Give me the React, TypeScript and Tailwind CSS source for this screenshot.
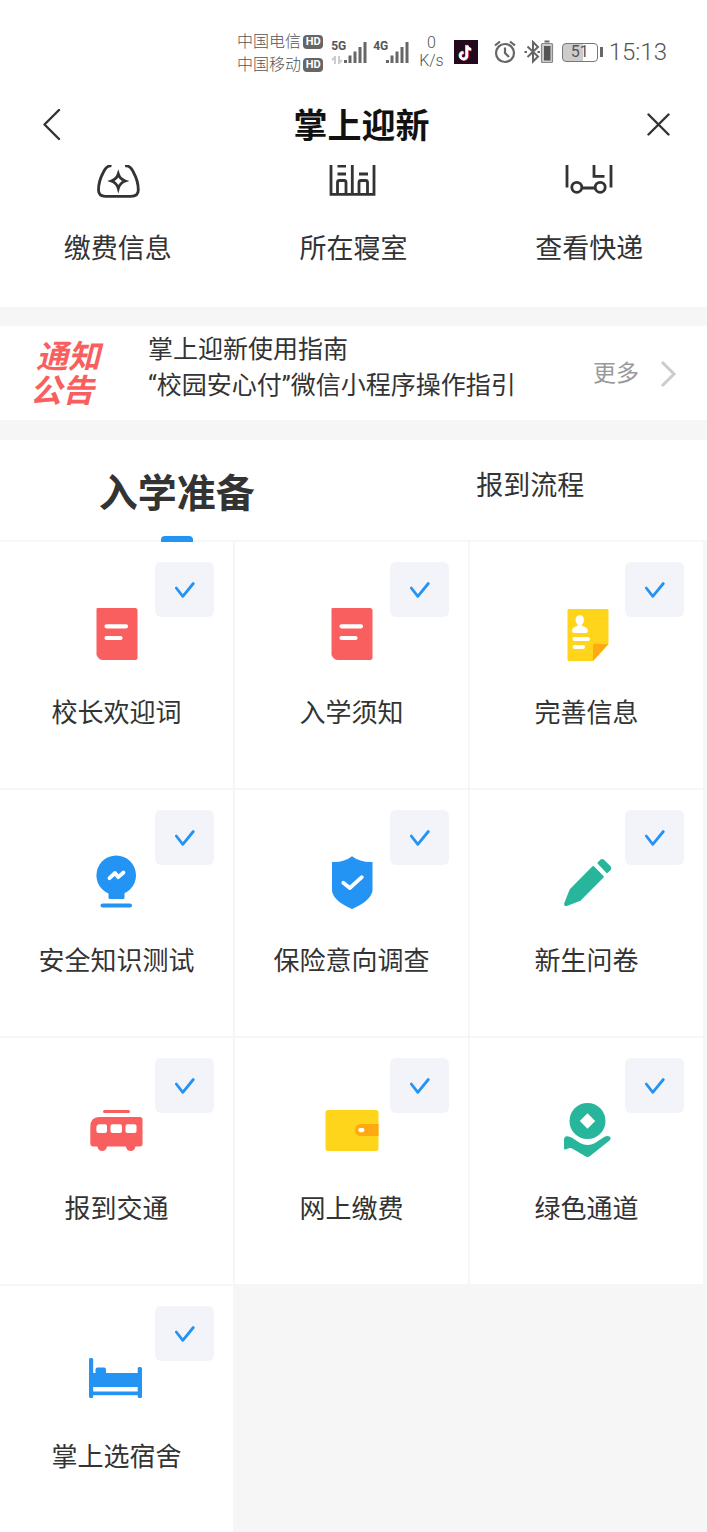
import React, { useState } from 'react';
import clsx from 'clsx';

type IconName =
  | 'book'
  | 'profile'
  | 'bulb'
  | 'shield'
  | 'pencil'
  | 'bus'
  | 'wallet'
  | 'grant'
  | 'bed';

interface Task {
  id: string;
  label: string;
  icon: IconName;
}

const TASKS: Task[] = [
  { id: 'welcome', label: '校长欢迎词', icon: 'book' },
  { id: 'guide', label: '入学须知', icon: 'book' },
  { id: 'profile', label: '完善信息', icon: 'profile' },
  { id: 'safety', label: '安全知识测试', icon: 'bulb' },
  { id: 'insurance', label: '保险意向调查', icon: 'shield' },
  { id: 'survey', label: '新生问卷', icon: 'pencil' },
  { id: 'traffic', label: '报到交通', icon: 'bus' },
  { id: 'payment', label: '网上缴费', icon: 'wallet' },
  { id: 'green', label: '绿色通道', icon: 'grant' },
  { id: 'dorm', label: '掌上选宿舍', icon: 'bed' }
];

const TABS = ['入学准备', '报到流程'];

const taskIcons: Record<IconName, React.ReactNode> = {
  book: (
    <>
      <path d="M8.500 2H46q2.500 0 2.500 2.500v47q0 2.500-2.500 2.500H14q-2.500 0-4-1.500t-2.500-3.500V3q0-1 1-1Z" fill="#fa5f60" />
      <path d="M17.500 20.300H37M17.500 32H31.500" stroke="#fff" strokeWidth="4.200" strokeLinecap="round" />
    </>
  ),
  profile: (
    <>
      <path d="M10 3H48q1.500 0 1.500 1.500V38L34 55H10q-1.500 0-1.500-1.500v-49Q8.500 3 10 3Z" fill="#fed51b" />
      <path d="M34 55V40q0-2.500 2.500-2.500 7 1 13 .5Z" fill="#ffaa12" />
      <ellipse cx="20.800" cy="14" rx="4.200" ry="4.800" fill="#fff" />
      <path d="M18.500 17h4.500v3q6 1 6 5 0 2-2.500 2h-11q-2.500 0-2.500-2 0-4 5.500-5Z" fill="#fff" />
      <path d="M15.500 33H29M15.500 41H24" stroke="#fff" strokeWidth="4" strokeLinecap="round" />
    </>
  ),
  bulb: (
    <>
      <circle cx="27.200" cy="21.300" r="19.800" fill="#2394f4" />
      <path d="M19.500 36h16v7.500q0 1.500-1.500 1.500H21q-1.500 0-1.500-1.500Z" fill="#2394f4" />
      <path d="M13.500 51.500H41" stroke="#2394f4" strokeWidth="4" strokeLinecap="round" />
      <path d="m20.500 24.200 5.500-5.200 3.200 4.200 5.300-4.700" fill="none" stroke="#fff" strokeWidth="3.800" strokeLinecap="round" strokeLinejoin="round" />
    </>
  ),
  shield: (
    <>
      <path d="M28 2.300Q36 8.500 48.500 8v29Q46.500 47 28 55 9.500 47 8 37V8q12.500 .5 20-5.700Z" fill="#2394f4" />
      <path d="m19.300 28.700 6.500 5.300 12-10.800" fill="none" stroke="#fff" strokeWidth="3.800" strokeLinecap="round" strokeLinejoin="round" />
    </>
  ),
  pencil: (
    <g fill="#27b59b" stroke="#27b59b" strokeWidth="2" strokeLinejoin="round">
      <path d="m39.500 9 2.800-2.700q1-.7 2 .2l6.500 6.500q1 1.200.2 2.200L48 18Z" />
      <path d="M34.200 13 43.800 22.700 21 45.800 7.500 51q-2 .3-1.200-2L11.500 36Z" />
    </g>
  ),
  bus: (
    <>
      <path d="M15.500 9.500H39.500" stroke="#fa5f60" strokeWidth="3" strokeLinecap="round" />
      <path d="M10 15H51q2.500 0 2.500 2.500V42q0 2.500-3 2.500H46.500q-1 4.500-4.800 4.500T36.800 44.500H18q-1 4.500-4.800 4.500T8.300 44.500H4.300q-3 0-3-3V25Q1.300 15 10 15Z" fill="#fa5f60" />
      <path d="M10.500 22.300H16q2 0 2 2V29q0 2-2 2H9.400q-2 0-2-2V26q0-3.700 3.100-3.700Z" fill="#fff" />
      <rect x="21.500" y="22.300" width="11.500" height="8.700" rx="2" fill="#fff" />
      <rect x="36.500" y="22.300" width="11" height="8.700" rx="2" fill="#fff" />
    </>
  ),
  wallet: (
    <>
      <rect x="1.500" y="8" width="53" height="41" rx="2.500" fill="#fed51b" />
      <path d="M54.500 22H37q-6 0-6 6t6 6H54.500Z" fill="#ffaa12" />
      <rect x="34.300" y="26" width="6.200" height="4.200" rx="2.100" fill="#fff" />
    </>
  ),
  grant: (
    <>
      <circle cx="28.500" cy="19" r="18" fill="#27b59b" />
      <path d="M28.500 11.300 36.200 19l-7.700 7.700L20.800 19Z" fill="#fff" />
      <path d="M5 38q0-3.500 3-3.800 2.500 0 5 1.600l8 5.200q4 2 7.500 2 4 0 7.500-2l10-6.500q2.500-1.200 4.500 0 2.200 1.800 0 4L31 54q-2.500 2-5 0L14 47q-2.500-1.500-5-.5l-2.500 1Q5 48 5 46Z" fill="#27b59b" />
    </>
  ),
  bed: (
    <g fill="#2394f4">
      <rect x="0" y="8" width="4.200" height="40" rx="1.500" />
      <rect x="48.700" y="17" width="4.300" height="31" rx="1.500" />
      <rect x="6.500" y="17.500" width="10.500" height="8" rx="2" />
      <rect x="3" y="23" width="47" height="14" />
      <rect x="3" y="41.500" width="47" height="3.700" />
    </g>
  )
};

const SHORTCUTS = [
  {
    label: '缴费信息',
    icon: (
      <>
        <path d="M20.500 1Q16 0 12.500 7 7.500 16 7.500 25q0 6.300 7 6.300H40q7.300 0 7.300-6.300 0-9-5-18Q39 0 34 1" />
        <path d="M27.300 9q1.500 5 7 7-5.500 2-7 7.500-1.500-5.500-7-7.500 5.500-2 7-7Z" />
      </>
    )
  },
  {
    label: '所在寝室',
    icon: (
      <>
        <path d="M5 0V29.300H48V0M26.300 0V29M11.500 1.200H20M11.500 9H20M33 9H42" />
        <path d="M11.500 29V17.500q0-2 2-2h4.500q2 0 2 2V29M33 29V17.500q0-2 2-2h4.500q2 0 2 2V29" />
      </>
    )
  },
  {
    label: '查看快递',
    icon: (
      <>
        <path d="M5 0V22.500M49 0V22.500M32 0V11.300H42.500M20 23H33" />
        <circle cx="14.800" cy="22.300" r="5" />
        <circle cx="38.200" cy="22.300" r="5" />
      </>
    )
  }
];

const SignalBars = () => (
  <svg className="h-6 w-6" viewBox="0 0 24 24" stroke="#666" strokeWidth="3">
    <path d="M2.500 23V20M7 23V15.500M12 23V11.500M17 23V7M22 23V2" />
  </svg>
);

const HdBadge = () => (
  <span className="flex h-[14px] w-5 items-center justify-center rounded bg-[#666] text-[11px] leading-none font-bold text-white">
    HD
  </span>
);

const StatusBar = () => (
  <div className="flex h-[84px] items-center justify-end pt-5 pr-10 font-light text-[#555]">
    <div className="pt-0.5 text-base leading-[23px]">
      {['中国电信', '中国移动'].map(carrier => (
        <div key={carrier} className="flex items-center gap-0.5">
          {carrier}
          <HdBadge />
        </div>
      ))}
    </div>

    <div className="ml-2 flex">
      <div className="w-3">
        <div className="text-xs leading-3 font-bold">5G</div>
        <svg className="mt-1 h-2 w-3" viewBox="0 0 12 8" fill="none" stroke="#ccc" strokeWidth="2">
          <path d="M4 8V1L1 4M8 0V7l3-3" />
        </svg>
      </div>
      <SignalBars />
    </div>
    <div className="ml-1.5 flex">
      <div className="w-3 text-xs leading-3 font-bold">4G</div>
      <SignalBars />
    </div>

    <div className="ml-2.5 text-center text-base leading-[18px]">
      0
      <br />
      K/s
    </div>

    {/* Notificación de la app de vídeo */}
    <svg className="ml-2.5 size-6" viewBox="0 0 24 24">
      <rect width="24" height="24" fill="#24091c" />
      <g fill="none" strokeWidth="2.600">
        <path d="M12.300 5V15.300a3.300 3.300 0 1 1-3.300-3.300M12.300 5q.8 3.500 4.200 4" stroke="#38e2dd" />
        <path d="M13.500 6V16.300a3.300 3.300 0 1 1-3.300-3.300M13.500 6q.8 3.500 4.200 4" stroke="#f0325a" />
        <path d="M12.900 5.500V15.800a3.300 3.300 0 1 1-3.300-3.300M12.900 5.500q.8 3.500 4.200 4" stroke="#fff" />
      </g>
    </svg>

    <svg className="ml-4 h-6 w-[22px]" viewBox="0 0 22 24" fill="none" stroke="#666" strokeWidth="2.200">
      <circle cx="11" cy="13" r="9" />
      <path d="M11 7.500V13l4 4M1 5.500 6 1.500M21 5.500 16 1.500" />
    </svg>

    <svg className="ml-2 h-6 w-[30px]" viewBox="0 0 30 24" fill="none" stroke="#666" strokeWidth="2">
      <path d="M3.500 6.500 14 16.500 9 21.500V2l5 5L3.500 17" />
      <path d="M.5 12H3M13.500 12H16" />
      <path d="M20.500 1.500H25.500" />
      <rect x="17.500" y="3.500" width="11" height="19" rx="1" fill="#ccc" stroke="#888" strokeWidth="1.200" />
      <rect x="20" y="6" width="6.500" height="14.500" fill="#555" stroke="none" />
    </svg>

    <div className="ml-2 flex items-center">
      <div className="flex h-[19px] w-9 items-center justify-center rounded border border-[#777] bg-linear-to-r from-[#ccc] from-60% to-white to-60% text-base leading-none font-normal">
        51
      </div>
      <div className="ml-0.5 h-2.5 w-[3px] bg-[#666]" />
    </div>

    <div className="ml-1.5 text-2xl">15:13</div>
  </div>
);

const TaskTile: React.FC<{ task: Task }> = ({ task }) => {
  const [done, setDone] = useState(true);

  return (
    <div className="relative h-[246px] bg-white">
      <a href={`#${task.id}`} className="flex h-full flex-col items-center pt-16">
        <svg className="size-14" viewBox="0 0 56 56">
          {taskIcons[task.icon]}
        </svg>
        <span className="mt-[33px] text-[26px] leading-9">{task.label}</span>
      </a>

      <label className="absolute top-5 right-[19px] flex h-[55px] w-[59px] items-center justify-center rounded-md bg-[#f3f4f9]">
        <input
          type="checkbox"
          aria-label={task.label}
          checked={done}
          onChange={e => setDone(e.target.checked)}
          className="peer absolute inset-0 appearance-none"
        />
        <svg className="hidden h-5 w-6 peer-checked:block" viewBox="0 0 24 20" fill="none" stroke="#2394f4" strokeWidth="2.800" strokeLinecap="round" strokeLinejoin="round">
          <path d="m3.300 8 6.500 8.300L20.300 3.500" />
        </svg>
      </label>
    </div>
  );
};

const App: React.FC = () => {
  const [activeTab, setActiveTab] = useState(0);

  return (
    <div className="min-h-screen bg-[#f6f6f6] font-[Roboto,'Noto_Sans_CJK_SC',sans-serif] text-[#333]">
      <div className="bg-white">
        <StatusBar />

        <header className="flex h-[81px] items-center justify-between pr-8 pl-9">
          <button type="button" aria-label="返回" className="flex h-8 w-11 items-center pl-1.5">
            <svg className="h-8 w-5" viewBox="0 0 20 32" fill="none" stroke="#333" strokeWidth="2.400" strokeLinecap="round" strokeLinejoin="round">
              <path d="M17 1 2.500 15.500 17 30" />
            </svg>
          </button>
          <h1 className="pt-0.5 text-[34px] leading-none font-bold text-[#111]">掌上迎新</h1>
          <button type="button" aria-label="关闭" className="flex size-8 items-center justify-center">
            <svg className="size-6" viewBox="0 0 24 24" stroke="#333" strokeWidth="2.400" strokeLinecap="round">
              <path d="M1.500 1.500 21.500 21.500M21.500 1.500 1.500 21.500" />
            </svg>
          </button>
        </header>

        <nav className="grid grid-cols-3 pb-10">
          {SHORTCUTS.map(({ label, icon }) => (
            <a key={label} href={`#${label}`} className="flex flex-col items-center">
              <svg className="h-[34px] w-[54px]" viewBox="0 0 54 34" fill="none" stroke="#333" strokeWidth="2.800">
                {icon}
              </svg>
              <span className="mt-8 text-[27px] leading-9">{label}</span>
            </a>
          ))}
        </nav>
      </div>

      <section className="mt-[19px] flex h-[94px] items-center bg-white pt-0.5 pr-[30px] pl-[30px]">
        <h2 className="w-[118px] text-[32px] leading-[34px] font-bold text-[#fa5f60] italic">
          <span className="block pl-1.5">通知</span>
          <span className="block">公告</span>
        </h2>
        <ul className="grow self-start pt-1 text-[25px] leading-9">
          <li>掌上迎新使用指南</li>
          <li>“校园安心付”微信小程序操作指引</li>
        </ul>
        <a href="#more" className="flex items-center gap-5 text-[23px] text-[#999]">
          更多
          <svg className="h-7 w-[18px]" viewBox="0 0 18 28" fill="none" stroke="#ccc" strokeWidth="3">
            <path d="M3 2 15 14 3 26" />
          </svg>
        </a>
      </section>

      <section className="mt-5">
        <div role="tablist" className="grid h-[102px] grid-cols-2 border-b-2 border-[#f7f7f7] bg-white">
          {TABS.map((tab, index) => (
            <button
              key={tab}
              type="button"
              role="tab"
              aria-selected={index === activeTab}
              onClick={() => setActiveTab(index)}
              className={clsx(
                'relative flex justify-center',
                index === activeTab ? 'pt-[26px] text-[39px] leading-14 font-bold' : 'pt-7 text-[27px] leading-9'
              )}
            >
              {tab}
              {index === activeTab && (
                <span className="absolute -bottom-0.5 h-1.5 w-8 rounded-t bg-[#2394f4]" />
              )}
            </button>
          ))}
        </div>

        <div className="grid grid-cols-3 gap-0.5 pr-1">
          {TASKS.map(task => (
            <TaskTile key={task.id} task={task} />
          ))}
        </div>
      </section>
    </div>
  );
};

export default App;
